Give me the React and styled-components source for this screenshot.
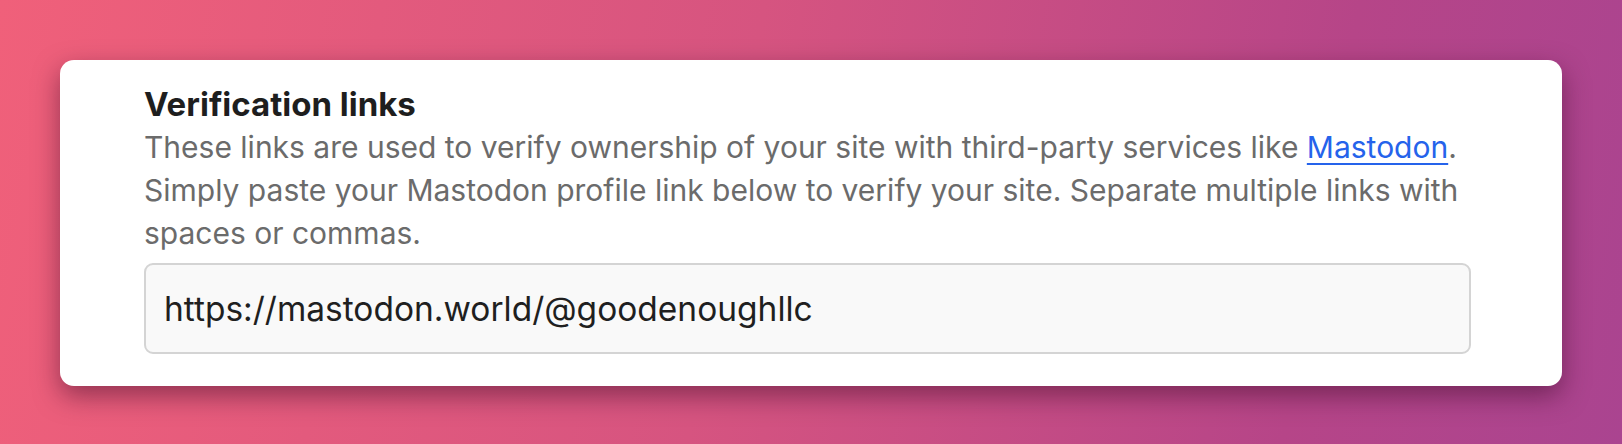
import React from "react";
import styled, { createGlobalStyle } from "styled-components";

const GlobalStyle = createGlobalStyle`
  * { box-sizing: border-box; }
  html, body { margin: 0; padding: 0; }
  body {
    font-family: Inter, "Noto Sans", "Liberation Sans", sans-serif;
    -webkit-font-smoothing: antialiased;
  }
`;

const Page = styled.main`
  width: 1622px;
  height: 444px;
  padding: 60px;
  background: linear-gradient(100deg, #f0607a 0%, #d65480 45%, #b64588 80%, #aa4490 100%);
`;

const Card = styled.section`
  background: #fff;
  border-radius: 14px;
  box-shadow: 0 10px 26px rgba(60, 10, 40, 0.5);
  padding: 22px 91px 32px 84px;
`;

const Title = styled.h2`
  margin: 0;
  font-size: 33px;
  line-height: 44px;
  font-weight: 700;
  color: #1e1e1e;
`;

const Description = styled.p`
  margin: 0 0 8px;
  font-size: 30px;
  line-height: 43px;
  color: #6b6b6b;
`;

const Link = styled.a`
  color: #2563eb;
  text-decoration: underline;
  text-underline-offset: 5px;
  text-decoration-thickness: 2px;
`;

const Field = styled.input`
  display: block;
  width: 100%;
  height: 91px;
  padding: 0 18px;
  border: 2px solid #d4d4d4;
  border-radius: 9px;
  background: #f9f9f9;
  font-family: inherit;
  font-size: 33.5px;
  color: #1f1f1f;
  outline: none;
`;

export default function App() {
  return (
    <>
      <GlobalStyle />
      <Page>
        <Card>
          <Title>Verification links</Title>
          <Description>
            These links are used to verify ownership of your site with third-party services like{" "}
            <Link href="#">Mastodon</Link>. Simply paste your Mastodon profile link below to verify
            your site. Separate multiple links with spaces or commas.
          </Description>
          <Field type="text" defaultValue="https://mastodon.world/@goodenoughllc" readOnly />
        </Card>
      </Page>
    </>
  );
}
